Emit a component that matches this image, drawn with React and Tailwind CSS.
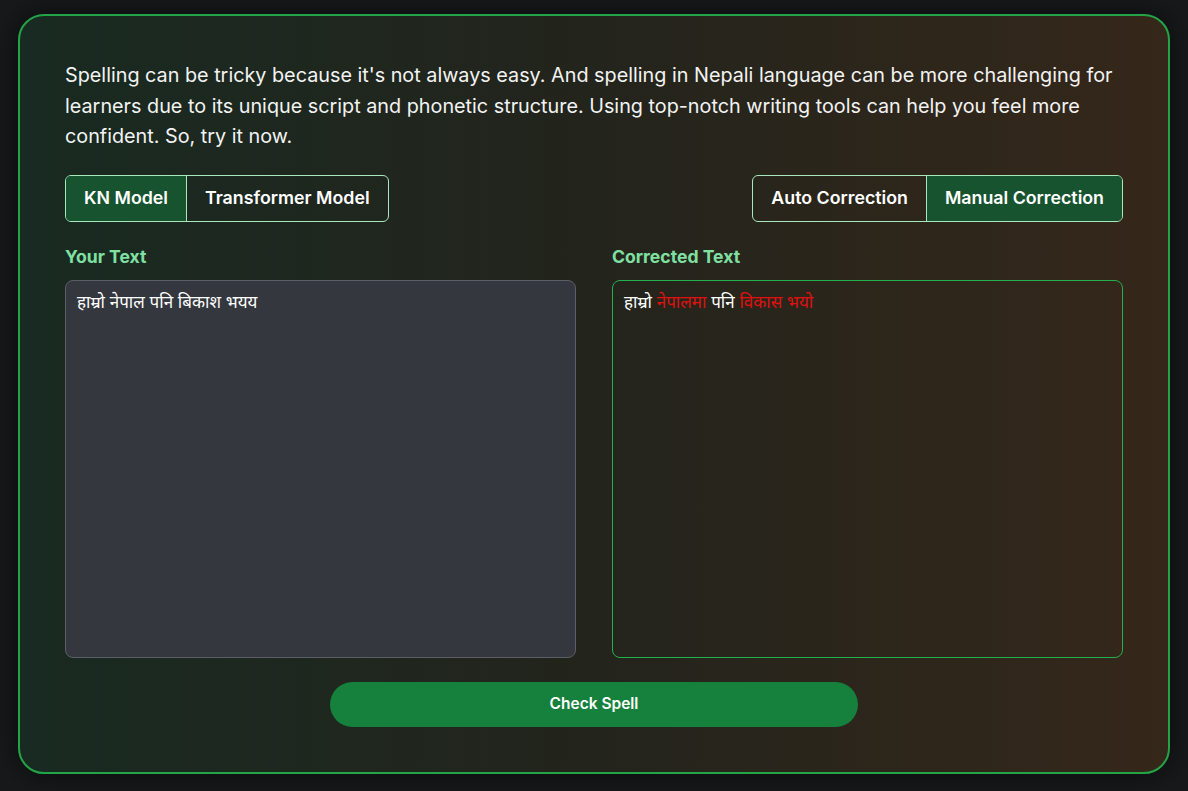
import React from "react";

export default function App() {
  const font = { fontFamily: "Inter, 'Noto Sans', sans-serif" };
  return (
    <div className="min-h-[791px] w-full bg-[#18191b] pt-[14px] pb-[16px] px-[18px]" style={font}>
      <div className="rounded-[26px] border-2 border-[#22a447] bg-gradient-to-r from-[#182a21] via-[#23241c] to-[#35271a] shadow-[0_0_30px_rgba(0,0,0,0.6)] px-[45px] pt-[44px] pb-[45px]">
        <p className="text-[19.8px] leading-[30.5px] text-[#f3f3f3]">
          Spelling can be tricky because it's not always easy. And spelling in Nepali language can be more challenging for learners due to its unique script and phonetic structure. Using top-notch writing tools can help you feel more confident. So, try it now.
        </p>
        <div className="mt-[23px] flex justify-between">
          <div className="flex rounded-md border border-[#a7e9bd] overflow-hidden">
            <button className="h-[45px] px-[18px] bg-[#17532f] text-white text-[17.8px] font-semibold border-r border-[#a7e9bd]">KN Model</button>
            <button className="h-[45px] px-[18px] text-white text-[17.8px] font-semibold">Transformer Model</button>
          </div>
          <div className="flex rounded-md border border-[#a7e9bd] overflow-hidden">
            <button className="h-[45px] px-[18px] text-white text-[17.8px] font-semibold border-r border-[#a7e9bd]">Auto Correction</button>
            <button className="h-[45px] px-[18px] bg-[#17532f] text-white text-[17.8px] font-semibold">Manual Correction</button>
          </div>
        </div>
        <div className="mt-[23px] grid grid-cols-2 gap-[36px]">
          <div>
            <div className="text-[17.6px] leading-[24px] font-bold text-[#7fe0a2] mb-[11px]">Your Text</div>
            <div className="h-[378px] rounded-lg border border-[#5b5e66] bg-[#34373e] px-[11px] py-[8px] text-[17px] leading-[26px] text-white">
              हाम्रो नेपाल पनि बिकाश भयय
            </div>
          </div>
          <div>
            <div className="text-[17.6px] leading-[24px] font-bold text-[#7fe0a2] mb-[11px]">Corrected Text</div>
            <div className="h-[378px] rounded-lg border border-[#22b14c] px-[11px] py-[8px] text-[17px] leading-[26px] text-white">
              हाम्रो <span className="text-[#e01010]">नेपालमा</span> पनि <span className="text-[#e01010]">विकास भयो</span>
            </div>
          </div>
        </div>
        <div className="mt-[24px] flex justify-center">
          <button className="h-[45px] w-[528px] rounded-full bg-[#16803d] text-white text-[15.5px] font-semibold">Check Spell</button>
        </div>
      </div>
    </div>
  );
}
